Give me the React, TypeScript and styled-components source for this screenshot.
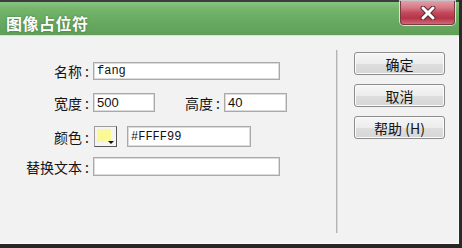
import React from "react";
import styled, { createGlobalStyle } from "styled-components";

const GlobalStyle = createGlobalStyle`
  html, body {
    margin: 0;
    padding: 0;
    background: #2b2b2b;
  }
  * {
    box-sizing: border-box;
  }
`;

const cjk = `"Noto Sans CJK SC", "Noto Sans", sans-serif`;

const Window = styled.div`
  width: 462px;
  height: 248px;
  display: flex;
  flex-direction: column;
  background: #f2f2f2;
  border-right: 3px solid #2b2b2b;
  border-bottom: 4px solid #262626;
  overflow: hidden;
`;

const TitleBar = styled.div`
  height: 37px;
  flex: 0 0 37px;
  display: flex;
  align-items: flex-start;
  border-top: 2px solid #3d3d3d;
  background: linear-gradient(
    to bottom,
    #8ac381 0%,
    #74b46b 20%,
    #68aa60 55%,
    #619f59 94%,
    #e8f0e6 96%,
    #f4f4f4 100%
  );
`;

const Title = styled.div`
  margin: 12px 0 0 6px;
  font-family: ${cjk};
  font-size: 16px;
  font-weight: 700;
  line-height: 18px;
  letter-spacing: 0.5px;
  color: #ffffff;
  text-shadow: 0 0 2px rgba(30, 70, 30, 0.6);
`;

const CloseButton = styled.div`
  margin-left: auto;
  margin-right: 4px;
  margin-top: -1px;
  width: 55px;
  height: 24px;
  display: flex;
  align-items: center;
  justify-content: center;
  border: 1px solid #7a3a44;
  border-top: none;
  border-radius: 0 0 4px 4px;
  box-shadow: 0 0 0 1px rgba(255, 255, 255, 0.7);
  background: linear-gradient(
    to bottom,
    #e3a0a9 0%,
    #d77784 30%,
    #c2475a 52%,
    #b53447 75%,
    #cf6a78 100%
  );
`;

const Body = styled.div`
  flex: 1;
  display: flex;
  border-right: 1px solid #fbfbfb;
  border-bottom: 1px solid #fbfbfb;
`;

const Form = styled.div`
  flex: 0 0 336px;
  display: flex;
  flex-direction: column;
  padding-top: 25px;
`;

const Row = styled.div<{ $top: number; $h: number }>`
  display: flex;
  align-items: center;
  margin-top: ${(p) => p.$top}px;
  height: ${(p) => p.$h}px;
`;

const Label = styled.div<{ $w: number; $ml?: number }>`
  width: ${(p) => p.$w}px;
  margin-left: ${(p) => p.$ml ?? 0}px;
  padding-right: 4px;
  text-align: right;
  font-family: ${cjk};
  font-size: 14px;
  color: #141414;
  white-space: nowrap;
`;

const Colon = styled.span`
  margin-left: 3px;
`;

const Field = styled.div<{ $w: number; $mono?: boolean; $ml?: number }>`
  width: ${(p) => p.$w}px;
  height: 100%;
  margin-left: ${(p) => p.$ml ?? 0}px;
  display: flex;
  align-items: center;
  padding-left: 3px;
  background: #ffffff;
  border: 1px solid #a9a9a9;
  box-shadow: inset 0 0 0 1px #dcdcdc;
  font-family: ${(p) =>
    p.$mono ? `"Liberation Mono", monospace` : `"Liberation Sans", sans-serif`};
  font-size: ${(p) => (p.$mono ? 12 : 13)}px;
  color: #111;
`;

const Swatch = styled.div`
  position: relative;
  width: 23px;
  height: 21px;
  margin-left: 1px;
  padding: 2px 5px 4px 2px;
  background: #f4f4f4;
  border: 1px solid #9c9c9c;
  border-right-color: #555;
  border-bottom-color: #555;
`;

const SwatchFill = styled.div`
  width: 100%;
  height: 100%;
  background: #fbf896;
`;

const Arrow = styled.div`
  position: absolute;
  right: 2px;
  bottom: 2px;
  width: 0;
  height: 0;
  border-left: 3px solid transparent;
  border-right: 3px solid transparent;
  border-top: 3px solid #111;
`;

const Separator = styled.div`
  width: 2px;
  height: 183px;
  margin-top: 13px;
  background: #b3b3b3;
  border-right: 1px solid #dadada;
`;

const Buttons = styled.div`
  display: flex;
  flex-direction: column;
  gap: 9px;
  padding-top: 15px;
  margin-left: 16px;
`;

const Button = styled.button`
  width: 91px;
  height: 23px;
  padding: 0;
  border: 1px solid #8c8c8c;
  border-radius: 3px;
  background: linear-gradient(to bottom, #f6f6f6 0%, #ececec 50%, #dedede 51%, #d6d6d6 100%);
  box-shadow: inset 0 0 0 1px #fbfbfb;
  font-family: ${cjk};
  font-size: 14px;
  line-height: 20px;
  color: #141414;
`;

const CloseIcon = () => (
  <svg width="18" height="14" viewBox="0 0 18 14">
    <path d="M4 2 L14 12 M14 2 L4 12" stroke="#5a2a34" strokeWidth="5" strokeLinecap="round" />
    <path d="M4 2 L14 12 M14 2 L4 12" stroke="#ffffff" strokeWidth="3" strokeLinecap="round" />
  </svg>
);

export default function App() {
  return (
    <>
      <GlobalStyle />
      <Window>
        <TitleBar>
          <Title>图像占位符</Title>
          <CloseButton>
            <CloseIcon />
          </CloseButton>
        </TitleBar>
        <Body>
          <Form>
            <Row $top={0} $h={18}>
              <Label $w={93}>
                名称<Colon>:</Colon>
              </Label>
              <Field $w={187} $mono>
                fang
              </Field>
            </Row>
            <Row $top={13} $h={19}>
              <Label $w={93}>
                宽度<Colon>:</Colon>
              </Label>
              <Field $w={62}>500</Field>
              <Label $w={45} $ml={24}>
                高度<Colon>:</Colon>
              </Label>
              <Field $w={63}>40</Field>
            </Row>
            <Row $top={14} $h={21}>
              <Label $w={93}>
                颜色<Colon>:</Colon>
              </Label>
              <Swatch>
                <SwatchFill />
                <Arrow />
              </Swatch>
              <Field $w={124} $mono $ml={10}>
                #FFFF99
              </Field>
            </Row>
            <Row $top={10} $h={19}>
              <Label $w={93}>
                替换文本<Colon>:</Colon>
              </Label>
              <Field $w={187} />
            </Row>
          </Form>
          <Separator />
          <Buttons>
            <Button>确定</Button>
            <Button>取消</Button>
            <Button>帮助 (H)</Button>
          </Buttons>
        </Body>
      </Window>
    </>
  );
}
